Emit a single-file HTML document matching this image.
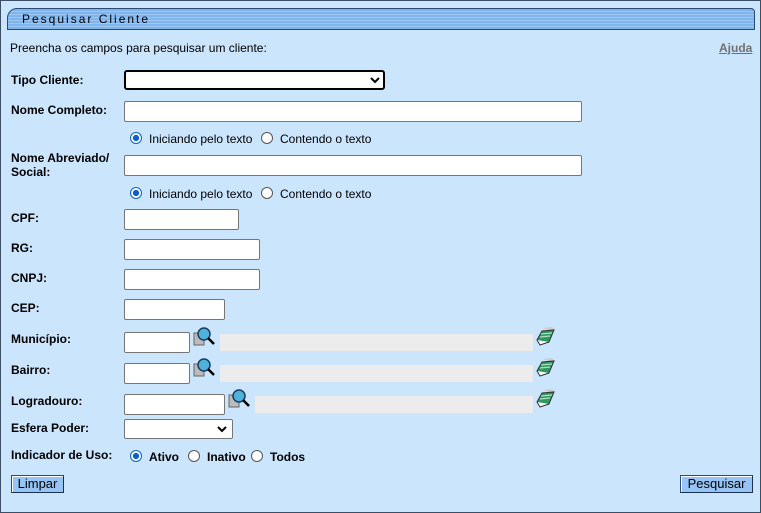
<!DOCTYPE html><html><head><style>
body{margin:0;width:761px;height:513px;background:#fff;font-family:"Liberation Sans",Arial,sans-serif;font-size:12px;color:#000;position:relative;overflow:hidden}
#f{position:absolute;left:0;top:0;width:759px;height:511px;background:#cbe5fd;border:1px solid #3c4e63}
.a{position:absolute}
.l{position:absolute;left:10px;font-weight:bold;font-size:12px}
.i{position:absolute;height:18px;background:#fff;border:1px solid #767676;border-radius:2px;box-sizing:border-box}
.g{position:absolute;height:17px;background:#ececec}
.r{position:absolute;width:12px;height:12px;border:1px solid #555;border-radius:50%;background:#fff;box-sizing:border-box}
.r.on{border:1px solid #0b5fd0;background:radial-gradient(circle,#0b5fd0 2.8px,#fff 3.4px)}
.b{position:absolute;height:18px;background:#95c4f5;border:1px solid #2b4c73;border-right-color:#1c3050;border-bottom-color:#1c3050;box-sizing:border-box;font-size:13px;line-height:16px;text-align:center;box-shadow:inset 1px 1px 0 #fff}
</style></head><body><div id="f">
<div class="a" style="left:6px;top:7px;width:748px;height:22px;border:1px solid #2c4a70;border-radius:10px 4px 0 0;background:repeating-linear-gradient(#7fb4ec 0 2px,#9cc7f3 2px 3px);box-sizing:border-box"></div>
<div class="a" style="left:21px;top:11px;font-size:12px;letter-spacing:2px">Pesquisar Cliente</div>
<div class="a" style="left:9px;top:40px">Preencha os campos para pesquisar um cliente:</div>
<div class="a" style="left:718px;top:40px;font-weight:bold;color:#707070;text-decoration:underline">Ajuda</div>
<div class="l" style="top:72px">Tipo Cliente:</div>
<div class="i" style="left:123px;top:69px;width:261px;height:20px;border:2px solid #000;border-radius:3px"></div>
<svg class="a" style="left:369px;top:75px" width="10" height="8"><path d="M1 2l4 4 4-4" stroke="#000" stroke-width="2" fill="none"/></svg>
<div class="l" style="top:102px">Nome Completo:</div>
<div class="i" style="left:123px;top:100px;width:458px;height:21px"></div>
<div class="r on" style="left:129px;top:131px"></div><div class="a" style="left:148px;top:131px">Iniciando pelo texto</div>
<div class="r" style="left:260px;top:131px"></div><div class="a" style="left:279px;top:131px">Contendo o texto</div>
<div class="l" style="top:150px;line-height:14px">Nome Abreviado/<br>Social:</div>
<div class="i" style="left:123px;top:154px;width:458px;height:21px"></div>
<div class="r on" style="left:129px;top:186px"></div><div class="a" style="left:148px;top:186px">Iniciando pelo texto</div>
<div class="r" style="left:260px;top:186px"></div><div class="a" style="left:279px;top:186px">Contendo o texto</div>
<div class="l" style="top:210px">CPF:</div><div class="i" style="left:123px;top:208px;width:115px;height:21px"></div>
<div class="l" style="top:240px">RG:</div><div class="i" style="left:123px;top:238px;width:136px;height:21px"></div>
<div class="l" style="top:270px">CNPJ:</div><div class="i" style="left:123px;top:268px;width:136px;height:21px"></div>
<div class="l" style="top:300px">CEP:</div><div class="i" style="left:123px;top:298px;width:101px;height:21px"></div>
<div class="l" style="top:331px">Município:</div><div class="i" style="left:123px;top:331px;width:66px;height:21px"></div>
<div class="l" style="top:362px">Bairro:</div><div class="i" style="left:123px;top:362px;width:66px;height:21px"></div>
<div class="l" style="top:393px">Logradouro:</div><div class="i" style="left:123px;top:393px;width:101px;height:21px"></div>
<div class="g" style="left:219px;top:333px;width:313px"></div>
<div class="g" style="left:219px;top:364px;width:313px"></div>
<div class="g" style="left:254px;top:395px;width:278px"></div>
<svg width="0" height="0" style="position:absolute"><defs>
<g id="lu"><rect x="1" y="7" width="10" height="12" fill="#bbb" stroke="#666"/><circle cx="11" cy="8" r="6" fill="#4fb2dc" stroke="#1b3d5e" stroke-width="1.5"/><path d="M15 12l6 6" stroke="#000" stroke-width="2.5"/></g>
<g id="er"><path d="M7 2l9-1 3 3-4 1z" fill="#ccc"/><path d="M6 5l12-1-5 12-9 2-3-4z" fill="#2f9860" stroke="#333"/><path d="M1 14l3 5 9-3" fill="#fff" stroke="#333"/><path d="M5 8l11-1M4 11l10-1" stroke="#aee0c4" stroke-width="1.2"/></g></defs></svg>
<svg class="a" style="left:192px;top:325px" width="24" height="22"><use href="#lu"/></svg>
<svg class="a" style="left:192px;top:356px" width="24" height="22"><use href="#lu"/></svg>
<svg class="a" style="left:227px;top:387px" width="24" height="22"><use href="#lu"/></svg>
<svg class="a" style="left:535px;top:325px" width="21" height="21"><use href="#er"/></svg>
<svg class="a" style="left:535px;top:356px" width="21" height="21"><use href="#er"/></svg>
<svg class="a" style="left:535px;top:387px" width="21" height="21"><use href="#er"/></svg>
<div class="l" style="top:420px">Esfera Poder:</div>
<div class="i" style="left:123px;top:418px;width:109px;height:20px"></div>
<svg class="a" style="left:216px;top:424px" width="10" height="8"><path d="M1 2l4 4 4-4" stroke="#000" stroke-width="2" fill="none"/></svg>
<div class="l" style="top:447px">Indicador de Uso:</div>
<div class="r on" style="left:129px;top:449px"></div><div class="a" style="left:148px;top:449px;font-weight:bold">Ativo</div>
<div class="r" style="left:187px;top:449px"></div><div class="a" style="left:206px;top:449px;font-weight:bold">Inativo</div>
<div class="r" style="left:250px;top:449px"></div><div class="a" style="left:269px;top:449px;font-weight:bold">Todos</div>
<div class="b" style="left:10px;top:474px;width:53px">Limpar</div>
<div class="b" style="left:679px;top:474px;width:73px">Pesquisar</div>
</div></body></html>
